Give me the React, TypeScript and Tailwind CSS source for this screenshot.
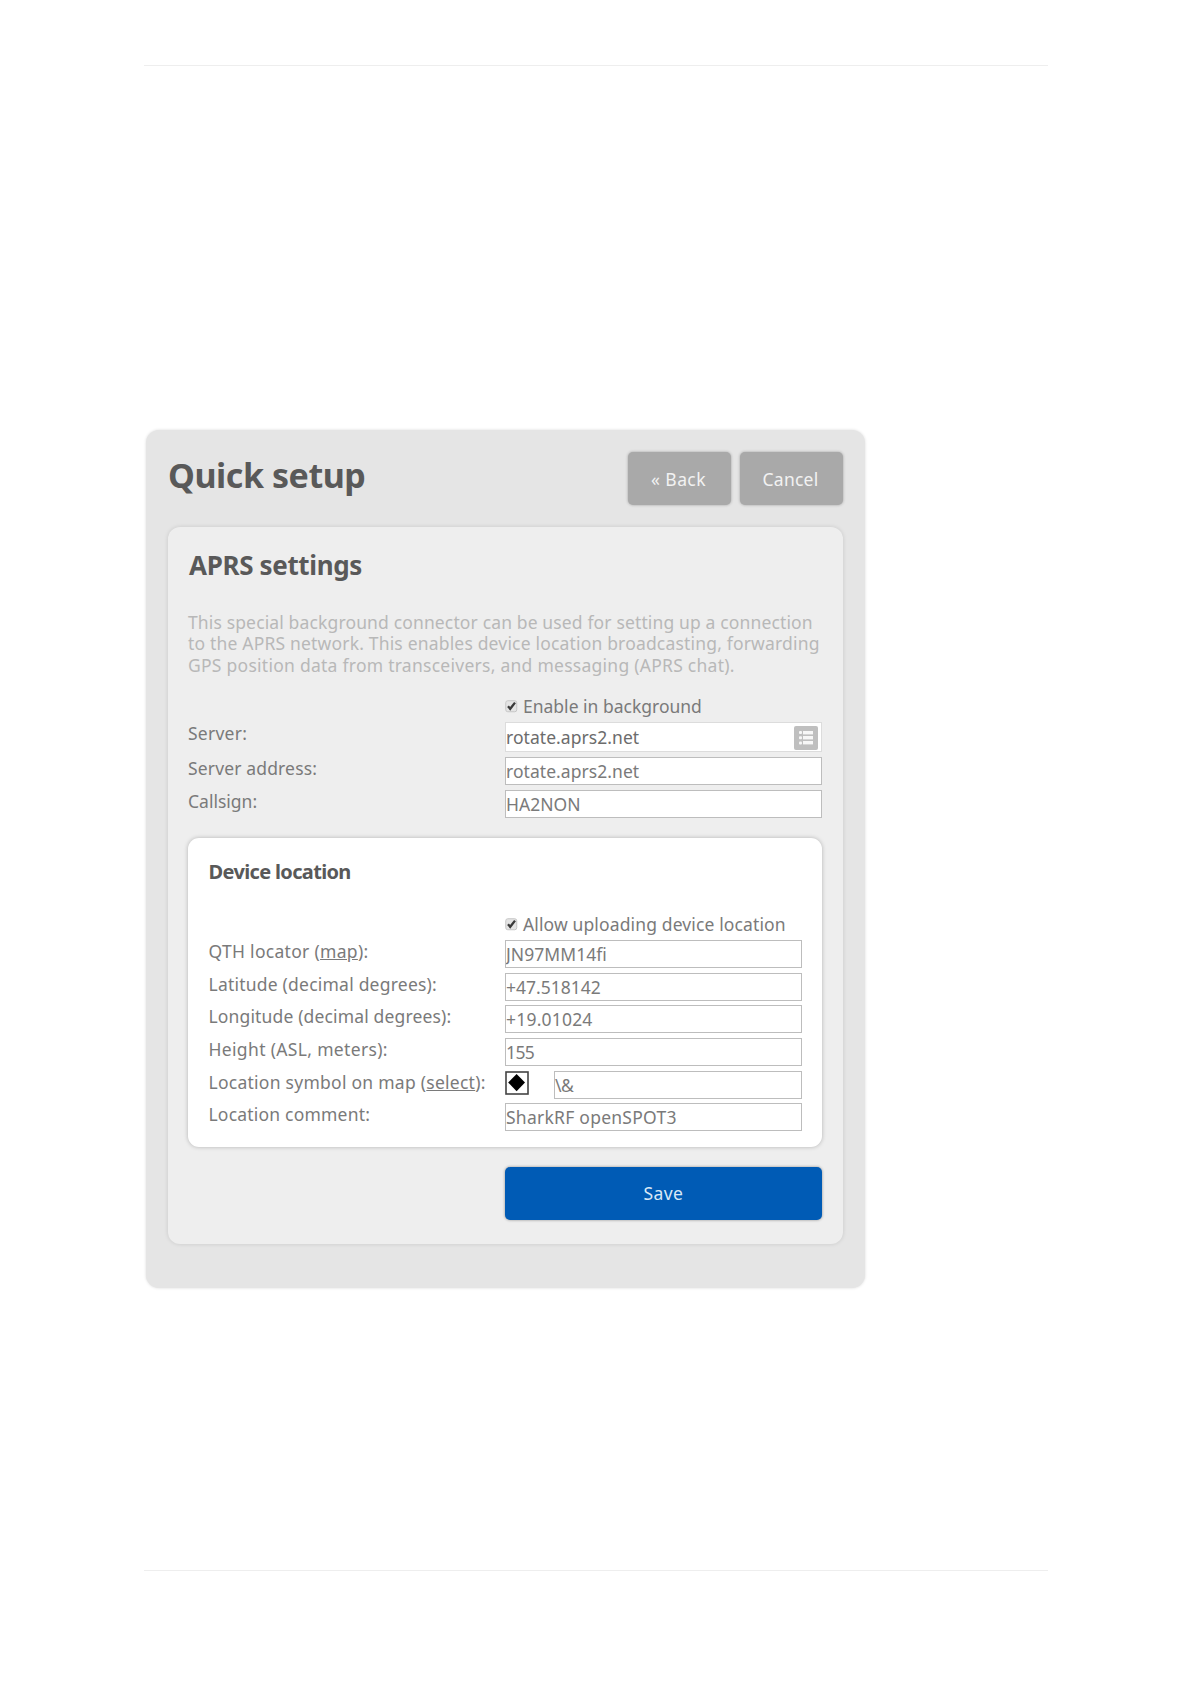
import { useState } from "react";
import type { ReactNode } from "react";
import { clsx } from "clsx";

interface CheckProps {
  label: string;
  className?: string;
}

function Check({ label, className }: CheckProps) {
  const [on, setOn] = useState(true);

  return (
    <label className={clsx("flex h-[22px] items-center", className)}>
      <input type="checkbox" className="sr-only" checked={on} onChange={() => setOn(!on)} />
      <svg width="13" height="13" viewBox="0 0 13 13" className="mb-px shrink-0">
        <rect x="0.75" y="0.75" width="11" height="11" rx="2" fill="#e4e4e4" stroke="#c6c6c6" />
        {on && <path d="M3 6.2 L5.2 8.8 L10 2.6" fill="none" stroke="#3a3a3a" strokeWidth="2.3" />}
      </svg>
      <span className="ml-[5px] whitespace-nowrap">{label}</span>
    </label>
  );
}

interface FieldProps {
  label: ReactNode;
  labelClass?: string;
  children: ReactNode;
}

function Field({ label, labelClass, children }: FieldProps) {
  return (
    <>
      <div className={clsx("leading-[22px] whitespace-nowrap", labelClass)}>{label}</div>
      {children}
    </>
  );
}

function TextInput({ value, className }: { value: string; className?: string }) {
  return (
    <input
      type="text"
      defaultValue={value}
      className={clsx("h-7 w-full min-w-0 border border-[#bdbdbd] bg-white p-0 leading-[26px] outline-none", className)}
    />
  );
}

function ListIcon() {
  return (
    <svg width="24" height="24" viewBox="0 0 24 24" className="shrink-0">
      <rect width="24" height="24" rx="2" fill="#bfbfbf" />
      <g fill="#f7f7f7">
        <rect x="5" y="5" width="3" height="3" rx="1" />
        <rect x="9" y="5" width="10" height="3.4" />
        <rect x="5" y="10.2" width="3" height="3" rx="1" />
        <rect x="9" y="10" width="10" height="3.4" />
        <rect x="5" y="15.4" width="3" height="3" rx="1" />
        <rect x="9" y="15" width="10" height="3.4" />
      </g>
    </svg>
  );
}

const topButton =
  "h-[53px] rounded-[5px] bg-[#a9a9a9] pt-px text-[#f2f2f2] shadow-[0_0_3px_rgba(0,0,0,0.3)]";

export default function App() {
  return (
    <div className="flex min-h-[1684px] flex-col bg-white pl-[144px] font-['Noto_Sans',sans-serif] text-[17.5px] text-[#7a7a7a]">
      <div className="mt-[65px] h-px w-[904px] bg-[#eee]" />

      <div className="mt-[364px] ml-0.5 h-[858px] w-[719px] rounded-[13px] bg-[#e5e5e5] px-[22px] pt-[22px] shadow-[0_0_3px_rgba(0,0,0,0.15)]">
        {/* Header */}
        <div className="flex h-[75px] items-start">
          <h1 className="flex-1 text-[34px] leading-[46px] font-bold tracking-[-0.45px] text-[#595959]">Quick setup</h1>
          <button type="button" className={clsx(topButton, "w-[103px] pr-0.5 tracking-[0.4px]")}>« Back</button>
          <button type="button" className={clsx(topButton, "ml-[9px] w-[103px] pr-0.5 tracking-[0.25px]")}>Cancel</button>
        </div>

        <div className="h-[717px] rounded-[12px] bg-[#eee] px-5 pt-[21px] shadow-[0_0_4px_rgba(0,0,0,0.13)]">
          <h2 className="pl-px text-[26px] leading-[34px] font-bold tracking-[-0.35px] text-[#595959]">APRS settings</h2>

          <p className="mt-[29.5px] leading-[21.5px] whitespace-nowrap text-[#b8b8b8]">
            <span className="block tracking-[0.14px]">This special background connector can be used for setting up a connection</span>
            <span className="block tracking-[0.18px]">to the APRS network. This enables device location broadcasting, forwarding</span>
            <span className="block tracking-[0.26px]">GPS position data from transceivers, and messaging (APRS chat).</span>
          </p>

          <Check label="Enable in background" className="mt-[19.5px] ml-[317px]" />

          <div className="mt-[4.5px] grid grid-cols-[317px_317px] items-start gap-y-[4.8px]">
            <Field label="Server:" labelClass="tracking-[0.25px]">
              <div className="flex h-[30px] items-center border border-[#dcdcdc] bg-white pt-px pr-[3px] tracking-[0.05px] text-[#6c6c6c]">
                <span className="flex-1">rotate.aprs2.net</span>
                <ListIcon />
              </div>
            </Field>
            <Field label="Server address:" labelClass="tracking-[0.15px]">
              <TextInput value="rotate.aprs2.net" className="tracking-[0.05px]" />
            </Field>
            <Field label="Callsign:">
              <TextInput value="HA2NON" />
            </Field>
          </div>

          {/* Device location */}
          <div className="mt-5 h-[309px] w-[634px] rounded-[11px] bg-white px-[20.5px] pt-5 shadow-[0_0_4px_rgba(0,0,0,0.25)]">
            <h3 className="text-[20px] leading-7 font-bold tracking-[-0.65px] text-[#595959]">Device location</h3>

            <Check label="Allow uploading device location" className="mt-7 ml-[296.5px] tracking-[0.13px]" />

            <div className="mt-[4.3px] grid grid-cols-[296.5px_296.5px] items-start gap-y-[4.7px]">
              <Field label={<>QTH locator (<a className="underline">map</a>):</>} labelClass="tracking-[0.3px]">
                <TextInput value="JN97MM14fi" className="tracking-[0.05px]" />
              </Field>
              <Field label="Latitude (decimal degrees):" labelClass="tracking-[0.22px]">
                <TextInput value="+47.518142" />
              </Field>
              <Field label="Longitude (decimal degrees):" labelClass="tracking-[0.15px]">
                <TextInput value="+19.01024" className="tracking-[0.2px]" />
              </Field>
              <Field label="Height (ASL, meters):" labelClass="tracking-[0.34px]">
                <TextInput value="155" className="tracking-[-0.6px]" />
              </Field>
              <Field
                label={<>Location symbol on map (<a className="underline">select</a>):</>}
                labelClass="tracking-[0.26px]"
              >
                <div className="flex items-start">
                  <svg width="24" height="24" viewBox="0 0 24 24" className="mr-[25px] shrink-0">
                    <rect x="1" y="1" width="22" height="22" fill="#fff" stroke="#444" strokeWidth="1.6" />
                    <path d="M11.6 3 L20 11.6 L11.6 20.2 L3.2 11.6 Z" fill="#000" />
                  </svg>
                  <TextInput value="\&" className="tracking-[-0.6px]" />
                </div>
              </Field>
              <Field label="Location comment:" labelClass="tracking-[0.2px]">
                <TextInput value="SharkRF openSPOT3" className="tracking-[0.25px]" />
              </Field>
            </div>
          </div>

          <button
            type="button"
            className="mt-5 ml-[317px] h-[53px] w-[317px] rounded-[5px] bg-[#005bb5] tracking-[0.4px] text-[#d9e8f6] shadow-[0_0_3px_rgba(0,0,0,0.4)]"
          >
            Save
          </button>
        </div>
      </div>

      <div className="mt-[282px] h-px w-[904px] bg-[#eee]" />
    </div>
  );
}
